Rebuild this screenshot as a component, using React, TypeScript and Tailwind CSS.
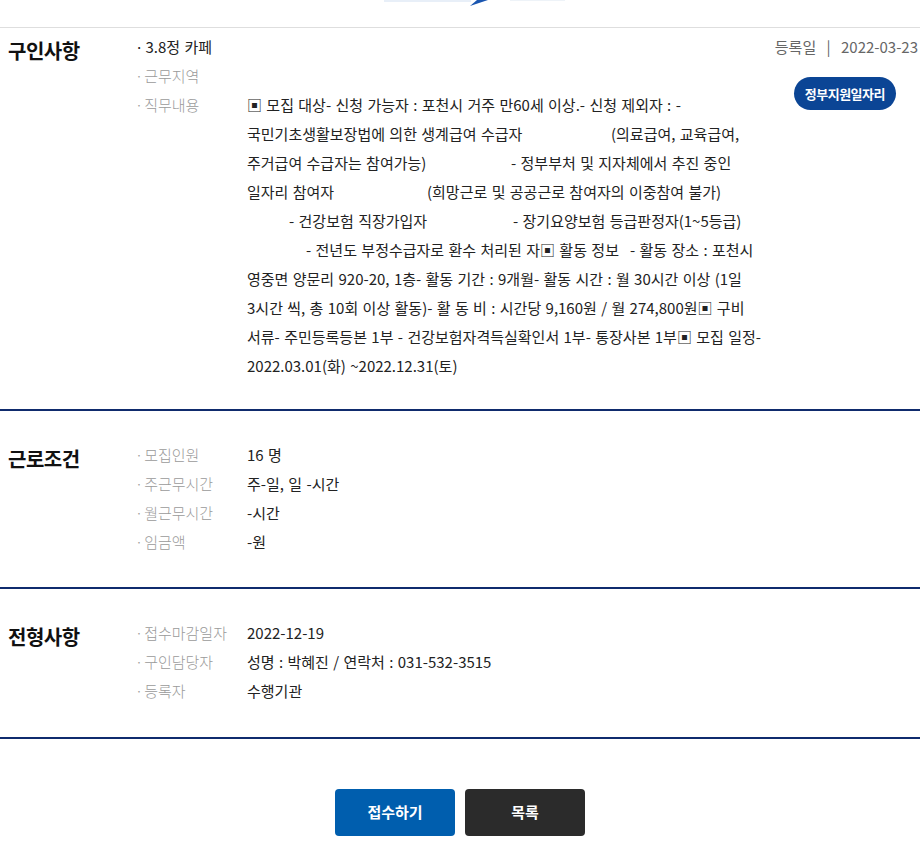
import React from "react";

type Row = { label: string; value?: React.ReactNode };

const FONT = "font-['Noto_Sans_CJK_KR','Noto_Sans',sans-serif]";

function InfoRow({ label, value }: Row) {
  return (
    <div className="flex leading-[29px]">
      <div className="w-[112px] -ml-[2px] shrink-0 text-[#9a9a9a] font-light">
        ·<span className="ml-[1px]">{label}</span>
      </div>
      <div className="flex-1 text-[#222]">{value}</div>
    </div>
  );
}

function SectionTitle({ children }: { children: React.ReactNode }) {
  return (
    <h2 className="w-[137px] shrink-0 pl-2 mt-[5px] text-[20px] leading-[28px] font-bold tracking-[-0.5px] text-[#111]">
      {children}
    </h2>
  );
}

// top edge of the cropped banner image
function TopStrip() {
  return (
    <div className="h-[28px] border-b border-[#dedede]">
      <svg width="920" height="27" viewBox="0 0 920 27">
        <rect x="384" y="0" width="87" height="2" fill="#e8eff8" />
        <polygon points="470,6 477,0 488,0" fill="#1a56b0" />
        <rect x="510" y="0" width="55" height="1" fill="#eef3f8" />
      </svg>
    </div>
  );
}

const jobLines: { pl?: string; first: string; w?: string; second?: string }[] = [
  { first: "▣ 모집 대상- 신청 가능자 : 포천시 거주 만60세 이상.- 신청 제외자 : -" },
  { first: "국민기초생활보장법에 의한 생계급여 수급자", w: "w-[364px]", second: "(의료급여, 교육급여," },
  { first: "주거급여 수급자는 참여가능)", w: "w-[264px]", second: "- 정부부처 및 지자체에서 추진 중인" },
  { first: "일자리 참여자", w: "w-[180px]", second: "(희망근로 및 공공근로 참여자의 이중참여 불가)" },
  { pl: "pl-[42px]", first: "- 건강보험 직장가입자", w: "w-[224px]", second: "- 장기요양보험 등급판정자(1~5등급)" },
  { pl: "pl-[59px]", first: "- 전년도 부정수급자로 환수 처리된 자▣ 활동 정보", w: "w-[324px]", second: "- 활동 장소 : 포천시" },
  { first: "영중면 양문리 920-20, 1층- 활동 기간 : 9개월- 활동 시간 : 월 30시간 이상 (1일" },
  { first: "3시간 씩, 총 10회 이상 활동)- 활 동 비 : 시간당 9,160원 / 월 274,800원▣ 구비" },
  { first: "서류- 주민등록등본 1부 - 건강보험자격득실확인서 1부- 통장사본 1부▣ 모집 일정-" },
  { first: "2022.03.01(화) ~2022.12.31(토)" },
];

export default function App() {
  return (
    <div className={`w-[920px] bg-white text-[15px] [word-spacing:1px] ${FONT}`}>
      <TopStrip />

      {/* 구인사항 */}
      <section className="flex pt-[4px] pb-[29px] border-b-2 border-[#0f2b6d]">
        <SectionTitle>구인사항</SectionTitle>
        <div className="flex-1">
          <div className="-ml-[2px] leading-[29px] text-[#222]">
            ·<span className="ml-[2px]">3.8정 카페</span>
          </div>
          <InfoRow label="근무지역" />
          <InfoRow
            label="직무내용"
            value={
              <div className="whitespace-pre">
                {jobLines.map((l, i) => (
                  <div key={i} className={`flex ${l.pl ?? ""}`}>
                    <span className={`shrink-0 ${l.w ?? ""}`}>{l.first}</span>
                    {l.second && <span>{l.second}</span>}
                  </div>
                ))}
              </div>
            }
          />
        </div>
        <div className="flex flex-col items-end pr-[2px]">
          <div className="leading-[29px] text-[#666] whitespace-nowrap">
            등록일 <span className="mx-[6px] text-[#666]">|</span> 2022-03-23
          </div>
          <span className="mt-[16px] mr-[22px] h-[33px] px-[11px] flex items-center rounded-full bg-[#0b4595] text-white text-[13px] font-bold tracking-[-0.5px] [word-spacing:0px]">
            정부지원일자리
          </span>
        </div>
      </section>

      {/* 근로조건 */}
      <section className="flex pt-[29px] pb-[31px] border-b-2 border-[#0f2b6d]">
        <SectionTitle>근로조건</SectionTitle>
        <div className="flex-1">
          <InfoRow label="모집인원" value="16 명" />
          <InfoRow label="주근무시간" value="주-일, 일 -시간" />
          <InfoRow label="월근무시간" value="-시간" />
          <InfoRow label="임금액" value="-원" />
        </div>
      </section>

      {/* 전형사항 */}
      <section className="flex pt-[29px] pb-[32px] border-b-2 border-[#0f2b6d]">
        <SectionTitle>전형사항</SectionTitle>
        <div className="flex-1">
          <InfoRow label="접수마감일자" value="2022-12-19" />
          <InfoRow label="구인담당자" value="성명 : 박혜진 / 연락처 : 031-532-3515" />
          <InfoRow label="등록자" value="수행기관" />
        </div>
      </section>

      <div className="flex justify-center gap-[10px] mt-[50px] pb-[6px]">
        <button className="w-[120px] h-[47px] rounded bg-[#005eae] text-white text-[15px] font-semibold">
          접수하기
        </button>
        <button className="w-[120px] h-[47px] rounded bg-[#2b2b2b] text-white text-[15px] font-semibold">
          목록
        </button>
      </div>
    </div>
  );
}
